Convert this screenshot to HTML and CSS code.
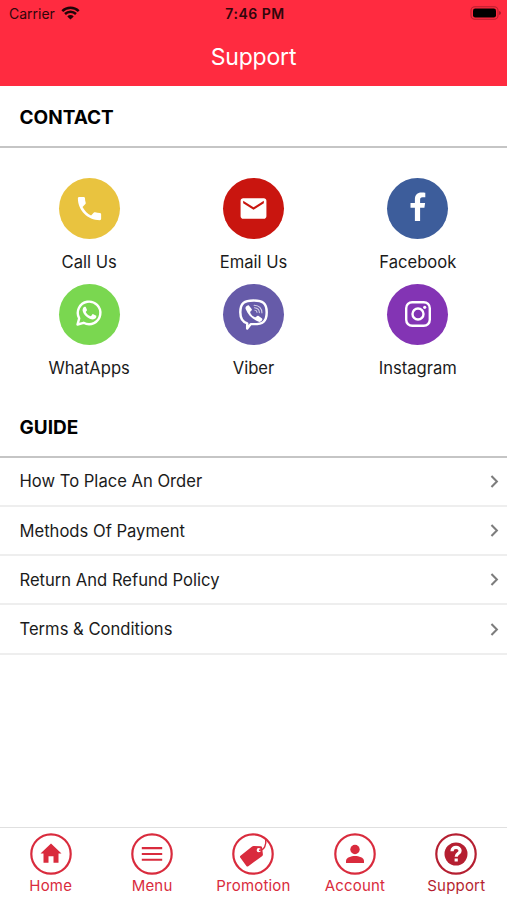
FILE: index.html
```html
<!DOCTYPE html>
<html lang="en">
<head>
  <meta charset="UTF-8" />
  <meta name="viewport" content="width=device-width, initial-scale=1" />
  <title>Support</title>
  <link rel="stylesheet" href="styles.css">
</head>
<body>
  <header class="header">
    <div class="status">
      <div class="carrier">
        <span>Carrier</span>
        <svg width="19" height="14" viewBox="0 0 19 14">
          <path d="M1.3 5.1a11.7 11.7 0 0 1 16.4 0M4 8a7.9 7.9 0 0 1 11 0" fill="none" stroke="#210508" stroke-width="2.5"/>
          <path d="M9.5 13.5 6.3 10.4a4.6 4.6 0 0 1 6.4 0z" fill="#210508"/>
        </svg>
      </div>
      <span class="time">7:46 PM</span>
      <div class="battery">
        <svg width="31" height="14" viewBox="0 0 31 14">
          <rect x="1" y=".7" width="27" height="12.6" rx="3.8" fill="none" stroke="#b81f2e" stroke-width="1.1"/>
          <rect x="3" y="2.5" width="23" height="9" rx="2.2" fill="#000"/>
          <path d="M29.3 5v4q1.4-.5 1.4-2t-1.4-2z" fill="#8a1521"/>
        </svg>
      </div>
    </div>
    <h1 class="title">Support</h1>
  </header>

  <main class="content">
    <h2 class="section-title">CONTACT</h2>
    <div class="contacts">
      <a class="contact">
        <span class="circle call">
          <svg width="31" height="31" viewBox="0 0 24 24"><path d="M6.62 10.79c1.44 2.83 3.76 5.14 6.59 6.59l2.2-2.2c.27-.27.67-.36 1.02-.24 1.12.37 2.33.57 3.57.57.55 0 1 .45 1 1V20c0 .55-.45 1-1 1C10.61 21 3 13.39 3 4c0-.55.45-1 1-1h3.5c.55 0 1 .45 1 1 0 1.25.2 2.45.57 3.57.11.35.03.74-.25 1.02l-2.2 2.2z"/></svg>
        </span>
        <span>Call Us</span>
      </a>
      <a class="contact">
        <span class="circle email">
          <svg width="31" height="31" viewBox="0 0 24 24"><path d="M20 4H4c-1.1 0-2 .9-2 2v12c0 1.1.9 2 2 2h16c1.1 0 2-.9 2-2V6c0-1.1-.9-2-2-2zm0 4-8 5-8-5V6l8 5 8-5v2z"/></svg>
        </span>
        <span>Email Us</span>
      </a>
      <a class="contact">
        <span class="circle facebook">
          <svg width="16" height="30" viewBox="0 0 16 30"><path d="M15.3.7v4.6h-2.7c-2.1 0-2.5 1-2.5 2.5v3.1h5l-.7 4.9h-4.3V29H4.9V15.8H.5v-4.9h4.4V7.1C4.9 2.8 7.5.4 11.4.4c1.9 0 3.4.2 3.9.3z"/></svg>
        </span>
        <span>Facebook</span>
      </a>
      <a class="contact">
        <span class="circle whatsapp">
          <svg width="28" height="28" viewBox="0 0 28 28">
            <path d="M2.5 25.5 4.2 19.4A11.3 11.3 0 1 1 8.6 23.8z" fill="none" stroke="#fff" stroke-width="2.4" stroke-linejoin="round"/>
            <path d="M9.9 7.7c.5 0 .8.1 1 .6l1 2.4c.2.5 0 .8-.9 1.9-.3.3-.2.5 0 .8 1.100 1.800 2.400 2.900 4.300 3.700.3.100.5.100.8-.2l1.200-1.500c.3-.4.600-.3 1-.2l2.500 1.200c.4.200.6.300.6.600 0 2.100-1.600 3.300-3.500 3.400-1.900 0-4.400-1.100-6.600-3-1.800-1.700-3.500-3.900-3.700-6-.1-1.700.8-3.700 2.300-3.700z"/>
          </svg>
        </span>
        <span>WhatApps</span>
      </a>
      <a class="contact">
        <span class="circle viber">
          <svg width="33" height="33" viewBox="0 0 32 34" preserveAspectRatio="none">
            <path d="M16 2.6c8.8 0 12.8 2.5 12.8 12.2S24.8 27 16 27q-1.5 0-2.7-.1L9.9 31.4V26.2C5 24.8 3.2 21.6 3.2 14.8 3.2 5.1 7.2 2.6 16 2.6z" fill="none" stroke="#fff" stroke-width="2.4" stroke-linejoin="round"/>
            <path d="M11.5 7.7 14.2 11.3c.5.9.1 1.5-.9 2.4-.9.8-.5 1.5.2 2.8.9 1.5 2.1 2.6 3.8 3.3.7.3 1.1 0 1.6-.7.6-.8 1.3-1 2.1-.5l3 2.2c.9.7.8 1.4.1 2.4-1.1 1.5-2.1 1.8-3.6 1.1-6-2.8-9.900-7-12.100-13-.5-1.400 0-2.300 1.400-3.300.7-.6 1.200-.8 1.700-.3z"/>
            <path class="waves" d="M16.5 7.5c4.5.2 7.6 3.2 7.7 8M16.9 10.1c2.9.2 4.7 2 4.8 5M17.3 12.5q2 .2 2.1 2.3"/>
          </svg>
        </span>
        <span>Viber</span>
      </a>
      <a class="contact">
        <span class="circle instagram">
          <svg width="28" height="28" viewBox="0 0 28 28">
            <rect x="2.2" y="2.2" width="23.6" height="23.6" rx="6" fill="none" stroke="#fff" stroke-width="2.4"/>
            <circle cx="14" cy="14" r="5.5" fill="none" stroke="#fff" stroke-width="2.4"/>
            <circle cx="20.7" cy="7.3" r="1.6"/>
          </svg>
        </span>
        <span>Instagram</span>
      </a>
    </div>

    <h2 class="section-title guide-title">GUIDE</h2>
    <ul class="guide">
      <li><span>How To Place An Order</span><svg class="chevron" viewBox="0 0 8 12"><path d="M1.2 1 6.2 6l-5 5"/></svg></li>
      <li><span>Methods Of Payment</span><svg class="chevron" viewBox="0 0 8 12"><path d="M1.2 1 6.2 6l-5 5"/></svg></li>
      <li><span>Return And Refund Policy</span><svg class="chevron" viewBox="0 0 8 12"><path d="M1.2 1 6.2 6l-5 5"/></svg></li>
      <li><span>Terms &amp; Conditions</span><svg class="chevron" viewBox="0 0 8 12"><path d="M1.2 1 6.2 6l-5 5"/></svg></li>
    </ul>
  </main>

  <nav class="tabs">
    <a class="tab">
      <svg viewBox="0 0 42 42">
        <circle class="ring" cx="21" cy="21" r="19.7"/>
        <path d="M21 10.5 31.5 20.5H28.5V29.8H23.5V23.2H18.5V29.8H13.5V20.5H10.5L21 10.5z"/>
      </svg>
      <span>Home</span>
    </a>
    <a class="tab">
      <svg viewBox="0 0 42 42">
        <circle class="ring" cx="21" cy="21" r="19.7"/>
        <path d="M10.8 14.1h20.4v2.1H10.8zM10.8 19.9h20.4V22H10.8zM10.8 25.7h20.4v2.1H10.8z"/>
      </svg>
      <span>Menu</span>
    </a>
    <a class="tab">
      <svg viewBox="0 0 42 42">
        <circle class="ring" cx="21" cy="21" r="19.7"/>
        <path fill-rule="evenodd" d="M8.5 22.8 19.8 13.7Q20.6 13 21.6 13L28.6 13.2Q29.9 13.3 30.1 14.5L30.9 21.2Q31 22.4 30 23.2L16.3 33.2Q15.2 33.9 14.4 32.9L8.2 24.6Q7.6 23.6 8.5 22.8zM26.7 15.1a2.1 2.1 0 1 0 .1 4.2 2.1 2.1 0 0 0-.1-4.2z"/>
        <path class="string" d="M27 17.2C32.5 17.5 34.5 12 33.7 5.5"/>
      </svg>
      <span>Promotion</span>
    </a>
    <a class="tab">
      <svg viewBox="0 0 42 42">
        <circle class="ring" cx="21" cy="21" r="19.7"/>
        <circle cx="21" cy="16.5" r="4.7"/>
        <path d="M12 30v-2.2c0-3.2 5.2-4.8 9-4.8s9 1.6 9 4.8V30z"/>
      </svg>
      <span>Account</span>
    </a>
    <a class="tab active">
      <svg viewBox="0 0 42 42">
        <circle class="ring" cx="21" cy="21" r="19.7"/>
        <circle cx="21" cy="21" r="11.5"/>
        <path class="question" d="M17 18.2C17 12.8 25.1 13.3 25.1 17.7c0 3-3.9 2.8-3.9 6M21.2 25.5v3"/>
      </svg>
      <span>Support</span>
    </a>
  </nav>
</body>
</html>
```
FILE: styles.css
```css
* {
  box-sizing: border-box;
}
body {
  margin: 0;
  height: 100vh;
  display: flex;
  flex-direction: column;
  background: #fff;
  color: #1b1b1b;
  font-family: Inter, "Liberation Sans", sans-serif;
  font-size: 16.6px;
}
svg {
  display: block;
}
.header {
  height: 86px;
  background: #ff2b40;
}
.status {
  display: grid;
  grid-template-columns: 1fr auto 1fr;
  align-items: center;
  height: 26px;
  padding: 0 6px 0 9px;
  font-size: 14px;
  color: #30060b;
}
.carrier {
  display: flex;
  align-items: center;
  gap: 6px;
}
.time {
  font-weight: 600;
  letter-spacing: 0.5px;
}
.battery {
  display: flex;
  justify-content: flex-end;
}
.title {
  margin: 0;
  line-height: 63px;
  text-align: center;
  font-size: 23px;
  font-weight: 400;
  letter-spacing: -0.2px;
  color: #fff;
}
.content {
  flex: 1;
}
.section-title {
  height: 62px;
  margin: 0;
  padding-left: 19.5px;
  border-bottom: 2px solid #c5c5c5;
  line-height: 63px;
  font-size: 19px;
  font-weight: 700;
  color: #000;
}
.contacts {
  display: grid;
  grid-template-columns: repeat(3, 1fr);
  grid-auto-rows: 106.3px;
  padding: 30px 7px 0;
}
.contact {
  display: flex;
  flex-direction: column;
  align-items: center;
  line-height: 46px;
}
.circle {
  display: flex;
  align-items: center;
  justify-content: center;
  flex: none;
  width: 61px;
  height: 61px;
  padding-bottom: 1px;
  border-radius: 50%;
}
.circle svg {
  fill: #fff;
}
.call {
  background: #e9c33f;
}
.email {
  background: #c9150f;
}
.facebook {
  padding-bottom: 3px;
  background: #3d5d9b;
}
.whatsapp {
  padding-bottom: 3px;
  background: #7ad750;
}
.viber {
  background: #665ba9;
}
.waves {
  fill: none;
  stroke: #fff;
  stroke-width: 1;
  stroke-linecap: round;
  opacity: 0.75;
}
.instagram {
  background: #8334b4;
}
.guide-title {
  margin-top: 5px;
}
.guide {
  margin: 0;
  padding: 0;
  list-style: none;
}
.guide li {
  display: flex;
  align-items: center;
  justify-content: space-between;
  height: 49.3px;
  padding: 0 8px 0 19.5px;
  border-bottom: 2px solid #eee;
}
.chevron {
  width: 9px;
  height: 13px;
  fill: none;
  stroke: #7d7d7d;
  stroke-width: 1.9;
}
.tabs {
  display: grid;
  grid-template-columns: repeat(5, 1fr);
  height: 73px;
  border-top: 1px solid #e0e0e0;
}
.tab {
  display: flex;
  flex-direction: column;
  align-items: center;
  padding-top: 5px;
  font-size: 15px;
  line-height: 21px;
  letter-spacing: 0.2px;
  color: #d92b3d;
}
.tab svg {
  width: 42px;
  height: 42px;
  fill: currentColor;
}
.tab .ring {
  fill: none;
  stroke: currentColor;
  stroke-width: 2.2;
}
.tab .string {
  fill: none;
  stroke: currentColor;
  stroke-width: 1.4;
}
.tab .question {
  fill: none;
  stroke: #fff;
  stroke-width: 3.2;
}
.tab.active {
  color: #b51f31;
}
```
